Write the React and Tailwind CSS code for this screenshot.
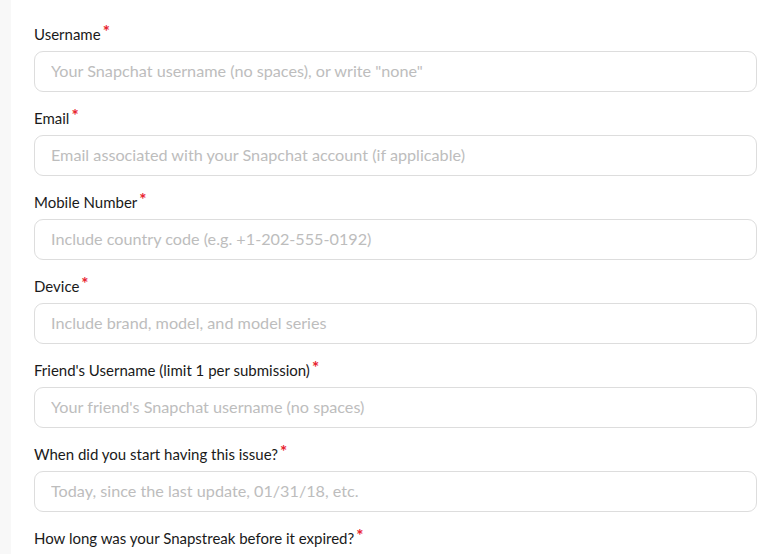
import React from "react";

const fields = [
  { label: "Username", placeholder: 'Your Snapchat username (no spaces), or write "none"' },
  { label: "Email", placeholder: "Email associated with your Snapchat account (if applicable)" },
  { label: "Mobile Number", placeholder: "Include country code (e.g. +1-202-555-0192)" },
  { label: "Device", placeholder: "Include brand, model, and model series" },
  { label: "Friend's Username (limit 1 per submission)", placeholder: "Your friend's Snapchat username (no spaces)" },
  { label: "When did you start having this issue?", placeholder: "Today, since the last update, 01/31/18, etc." },
  { label: "How long was your Snapstreak before it expired?", placeholder: "" },
];

const App = () => {
  return (
    <div
      className="flex h-[554px] overflow-hidden bg-white"
      style={{ fontFamily: "Lato, 'Liberation Sans', sans-serif" }}
    >
      <div className="w-[11px] shrink-0 bg-[#f8f8f8]" />
      <form className="flex-1 pl-[23px] pr-[16px] pt-[24px]">
        {fields.map((f) => (
          <div key={f.label} className="mb-[16px]">
            <label className="flex h-[20px] items-center text-[15px] text-[#1a1a1a]">
              {f.label}
              <span className="ml-[2px] -mt-[6px] text-[17px] font-bold leading-none text-[#e8222e]">*</span>
            </label>
            <input
              type="text"
              placeholder={f.placeholder}
              className="mt-[7px] h-[41px] w-full rounded-[9px] border border-[#dddddd] px-[16px] pb-[3px] text-[16.2px] text-[#333] outline-none placeholder:text-[#bdbdbd]"
            />
          </div>
        ))}
      </form>
    </div>
  );
};

export default App;
